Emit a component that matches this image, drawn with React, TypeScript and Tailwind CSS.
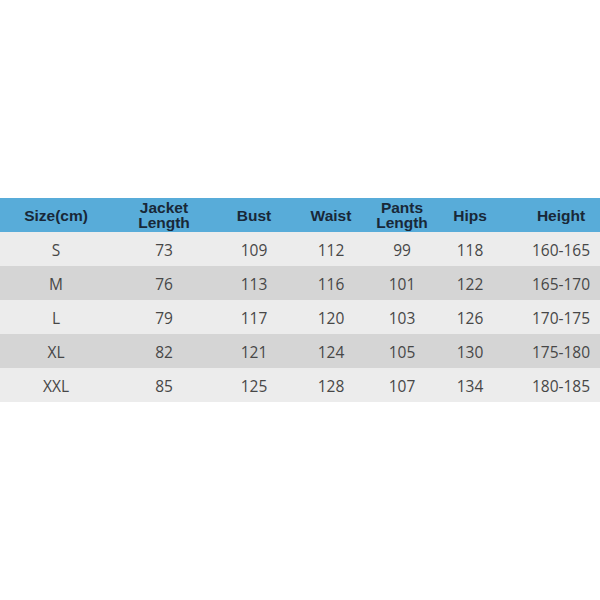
const headers = ["Size(cm)", "Jacket\nLength", "Bust", "Waist", "Pants\nLength", "Hips", "Height"];

const rows = [
  ["S", "73", "109", "112", "99", "118", "160-165"],
  ["M", "76", "113", "116", "101", "122", "165-170"],
  ["L", "79", "117", "120", "103", "126", "170-175"],
  ["XL", "82", "121", "124", "105", "130", "175-180"],
  ["XXL", "85", "125", "128", "107", "134", "180-185"],
];

const cols = "grid grid-cols-[112px_104px_76px_78px_64px_72px_94px]";

export default function App() {
  return (
    <div className="w-[600px] h-[600px] bg-white pt-[198px]">
      <div className={`${cols} h-[34px] bg-[#58acd9] items-center text-[#182838] font-bold text-[15.5px] leading-[15px] font-['Liberation_Sans',Arial,sans-serif]`}>
        {headers.map((h, i) => (
          <div key={h} className={`text-center whitespace-pre-line ${i === 6 ? "pl-4" : ""}`}>
            {h}
          </div>
        ))}
      </div>
      {rows.map((r, ri) => (
        <div
          key={r[0]}
          className={`${cols} h-[34px] pt-[3px] items-center text-[15.5px] text-[#474747] font-['Open_Sans',sans-serif] ${
            ri % 2 === 0 ? "bg-[#ececec]" : "bg-[#d5d5d5]"
          }`}
        >
          {r.map((c, i) => (
            <div key={i} className={`text-center ${i === 6 ? "pl-4" : ""}`}>
              {c}
            </div>
          ))}
        </div>
      ))}
    </div>
  );
}
